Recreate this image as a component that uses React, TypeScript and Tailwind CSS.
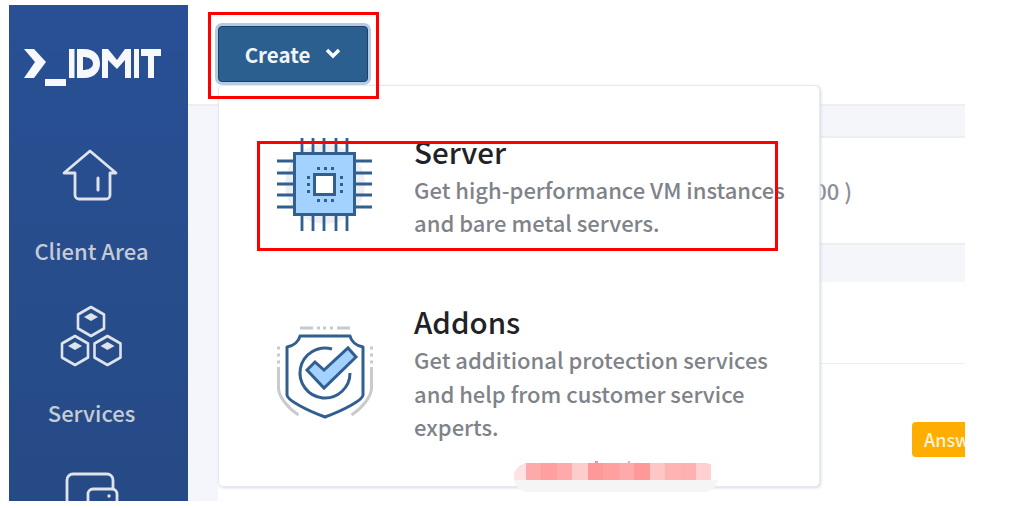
import React from "react";

const font = { fontFamily: '"Noto Sans CJK SC", "Noto Sans", sans-serif' };

function Logo() {
  return (
    <svg viewBox="0 0 138 42" className="h-[42px] w-[138px]" fill="#f7f8fb">
      <path d="M0 3h10l12 13-12 16H0l11-16z" />
      <rect x="21" y="33" width="21" height="7" />
      <rect x="45" y="3" width="5.500" height="29" />
      <path fillRule="evenodd" d="M53 3h7c11 0 16 7 16 14.500S71 32 60 32h-7zm6 8v13c5 0 10-2 10-6.500S64 11 59 11z" />
      <path d="M78 32V3h6l9 11 8-11h6v29h-6V14l-8 9-9-9v18z" />
      <rect x="110" y="3" width="5" height="29" />
      <path d="M117 3h20v7h-7v22h-6V10h-7z" />
    </svg>
  );
}

function HomeIcon() {
  return (
    <svg viewBox="0 0 56 52" className="h-[52px] w-[56px]" fill="none" stroke="#dfe3ea" strokeWidth="2.800" strokeLinejoin="round" strokeLinecap="round">
      <path d="M28 2 2 24h11v22a4 4 0 0 0 4 4h27a4 4 0 0 0 4-4V24h6z" />
      <path d="M36 29v12" strokeWidth="3" />
    </svg>
  );
}

function ServicesIcon() {
  return (
    <svg viewBox="0 0 62 62" className="h-[62px] w-[62px]" fill="none" stroke="#dfe3ea" strokeWidth="2.600" strokeLinejoin="round">
      <path d="m31 2 13 7.500v14L31 31l-13-7.500v-14z" />
      <path d="m15 31 13 7.500v14L15 60 2 52.500v-14z" />
      <path d="m47.500 31 13 7.500v14l-13 7.500-13-7.500v-14z" />
      <path d="m31 8 7 4-7 4-7-4zM15 37l7 4-7 4-7-4zM47.500 37l7 4-7 4-7-4z" fill="#dfe3ea" stroke="none" />
    </svg>
  );
}

function WalletIcon() {
  return (
    <svg viewBox="0 0 54 30" className="h-[30px] w-[54px]" fill="none" stroke="#dfe3ea" strokeWidth="2.800">
      <path d="M2 30V8a6 6 0 0 1 6-6h34a6 6 0 0 1 6 6v9" />
      <rect x="23" y="17" width="29" height="20" rx="5" />
      <circle cx="44" cy="24" r="1.700" fill="#dfe3ea" stroke="none" />
    </svg>
  );
}

function ChipIcon() {
  const cols = [27, 38, 49, 61, 72];
  const rows = [25, 37, 48, 59, 71];
  return (
    <svg viewBox="0 0 100 98" className="h-[98px] w-[100px]" fill="none">
      <circle cx="50" cy="48" r="40" fill="#eeeff2" />
      <g stroke="#315f90" strokeWidth="2.800">
        {cols.map((x) => (
          <path key={x} d={`M${x} 2v14M${x} 80v15`} />
        ))}
        {rows.map((y) => (
          <path key={y} d={`M2 ${y}h16M81 ${y}h16`} />
        ))}
      </g>
      <rect x="19.500" y="17.500" width="60" height="61" fill="#a3d2ff" stroke="#315f90" strokeWidth="3" />
      <rect x="39.500" y="38.500" width="20" height="20" fill="#fff" stroke="#315f90" strokeWidth="3" />
      <g fill="#315f90">
        {[0, 1, 2].map((i) => (
          <React.Fragment key={i}>
            <rect x={42 + i * 7} y="31" width="3" height="3" />
            <rect x={42 + i * 7} y="63" width="3" height="3" />
            <rect x="32" y={40 + i * 7} width="3" height="3" />
            <rect x="65" y={40 + i * 7} width="3" height="3" />
          </React.Fragment>
        ))}
      </g>
    </svg>
  );
}

function ShieldIcon() {
  return (
    <svg viewBox="0 0 100 94" className="h-[94px] w-[100px]" fill="none">
      <path d="M25 2h13M62 2h13M42 2h3M48 2h3M55 2h3M2 22h3M2 29h3M2 36h3M95 22h3M95 29h3M95 36h3" stroke="#c8cace" strokeWidth="3.200" />
      <path d="M3.500 41v21c0 8 9 20 20 27M96.500 41v21c0 8-9 20-20 27" stroke="#c8cace" strokeWidth="3" />
      <path d="M25 10h50c1 5 6 10 13 11v48c0 5-19 15-38 22-19-7-38-17-38-22V21c7-1 12-6 13-11z" fill="#fff" stroke="#315f90" strokeWidth="3" strokeLinejoin="round" />
      <path d="M57 23A25 25 0 1 0 75 47" stroke="#315f90" strokeWidth="3" />
      <path d="m32 44 8-8 9 8 24-22 8 9-32 31z" fill="#a3d2ff" stroke="#315f90" strokeWidth="3" />
    </svg>
  );
}

export default function App() {
  return (
    <div className="relative flex h-[508px] w-[1024px] overflow-hidden bg-white" style={font}>
      {/* sidebar */}
      <aside className="mb-[7px] ml-[9px] mt-[5px] flex w-[179px] shrink-0 flex-col items-center overflow-hidden bg-gradient-to-b from-[#295095] to-[#254a85] pr-[14px]">
        <div className="ml-[2px] mt-[41px]">
          <Logo />
        </div>
        <div className="mr-[3px] mt-[61px]">
          <HomeIcon />
        </div>
        <span className="mt-[34px] text-[22px] font-medium leading-[30px] text-[#c6cbd6]">Client Area</span>
        <div className="mr-[1px] mt-[40px]">
          <ServicesIcon />
        </div>
        <span className="mt-[30px] text-[22px] font-medium leading-[30px] text-[#c6cbd6]">Services</span>
        <div className="mt-[45px]">
          <WalletIcon />
        </div>
      </aside>

      {/* page behind the menu */}
      <main className="mb-[7px] flex w-[777px] shrink-0 flex-col">
        <div className="h-[106px] shrink-0 border-b-2 border-[#eceef3] bg-white" />
        <div className="flex flex-1">
          <div className="w-[30px] shrink-0 bg-[#f5f6fb]" />
          <div className="flex flex-1 flex-col">
            <div className="h-[32px] border-b-2 border-[#eceef3] bg-[#f4f6fa]" />
            <div className="flex h-[105px] items-center justify-end pr-[113px] text-[22px] font-medium text-[#8a8f96]">
              00 )
            </div>
            <div className="h-[39px] border-t-2 border-[#eceef3] bg-[#f4f6fa]" />
            <div className="h-[82px] border-b border-[#eceef3] bg-white" />
            <div className="flex flex-1 justify-end pt-[58px]">
              <div className="h-[35px] w-[53px] overflow-hidden whitespace-nowrap rounded-l-[4px] bg-[#ffae00] pl-[12px] text-[18px] font-medium leading-[35px] text-[#fff3d6]">
                Answer
              </div>
            </div>
          </div>
        </div>
      </main>

      {/* create button */}
      <button className="absolute left-[218px] top-[26px] flex h-[56px] w-[150px] items-center justify-center gap-[15px] rounded-[4px] border border-[#1d3f62] bg-[#2a5f8f] text-[20.5px] font-semibold leading-[30px] text-[#f2f5f8] shadow-[0_0_0_3px_#b4cbe6]">
        Create
        <svg viewBox="0 0 16 12" className="h-[12px] w-[16px]" fill="none" stroke="#fff" strokeWidth="3.500">
          <path d="m2 2 6 6 6-6" />
        </svg>
      </button>

      {/* dropdown */}
      <div className="absolute left-[218px] top-[85px] h-[402px] w-[602px] rounded-[5px] border border-[#e6e9ef] bg-white shadow-[1px_1px_3px_#d6dbe4]">
        <div className="absolute left-[56px] top-[50px]">
          <ChipIcon />
        </div>
        <div className="absolute left-[195px] top-[45px]">
          <div className="text-[29.5px] font-medium leading-[40px] text-[#1f2226]">Server</div>
          <div className="mt-[1.500px] text-[22px] font-medium leading-[33px] text-[#7f8389]">
            Get high-performance VM instances
            <br />
            and bare metal servers.
          </div>
        </div>
        <div className="absolute left-[56px] top-[240px]">
          <ShieldIcon />
        </div>
        <div className="absolute left-[195px] top-[215px]">
          <div className="text-[29.5px] font-medium leading-[40px] text-[#1f2226]">Addons</div>
          <div className="mt-[2px] text-[22px] font-medium leading-[33.500px] text-[#7f8389]">
            Get additional protection services
            <br />
            and help from customer service
            <br />
            experts.
          </div>
        </div>
      </div>

      {/* redacted strip */}
      <div className="absolute left-[514px] top-[463px] flex h-[29px] w-[204px] flex-col overflow-hidden rounded-[14px] bg-[#f6f5f5]">
        <div className="flex h-[17px] bg-[#fde3e3]">
          <span className="ml-[12px] w-[15px] bg-[#ffaaaa]" />
          <span className="w-[16px] bg-[#ff9f9f]" />
          <span className="w-[15px] bg-[#ffaaaa]" />
          <span className="w-[16px] bg-[#ffcccc]" />
          <span className="w-[15px] bg-[#ff9999]" />
          <span className="w-[16px] bg-[#ff9f9f]" />
          <span className="w-[15px] bg-[#ffaaaa]" />
          <span className="w-[16px] bg-[#ff9999]" />
          <span className="w-[15px] bg-[#ffc6c6]" />
          <span className="w-[16px] bg-[#ffb3b3]" />
          <span className="w-[15px] bg-[#ffb0b0]" />
          <span className="w-[15px] bg-[#ffd0d0]" />
          <span className="flex-1 bg-white" />
        </div>
      </div>
      <span className="absolute left-[595px] top-[461px] h-[2px] w-[3px] bg-[#ff8a8a]" />
      <span className="absolute left-[628px] top-[461px] h-[2px] w-[2px] bg-[#ffa8a8]" />

      {/* red annotation boxes */}
      <div className="pointer-events-none absolute left-[208px] top-[12px] h-[87px] w-[171px] border-[3px] border-[#ff0000]" />
      <div className="pointer-events-none absolute left-[257px] top-[141px] h-[110px] w-[521px] border-[3px] border-[#ff0000]" />
    </div>
  );
}
